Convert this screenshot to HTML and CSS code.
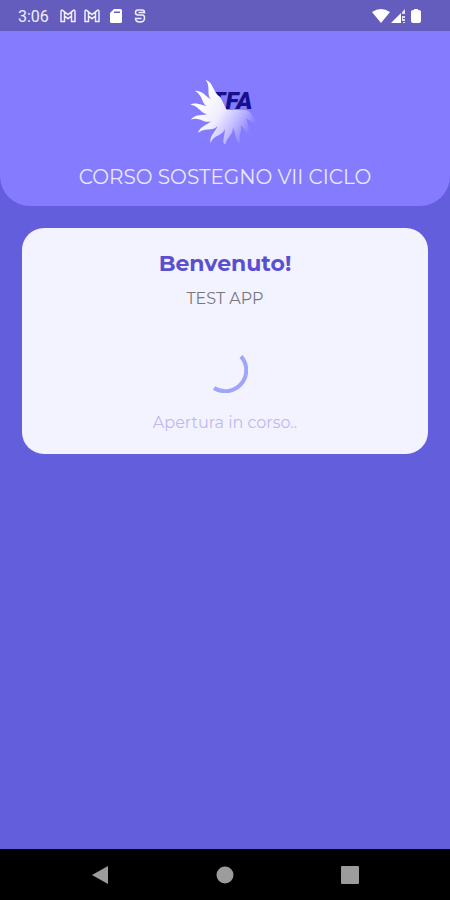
FILE: index.html
```
<!DOCTYPE html>
<html lang="it">
<head>
  <meta charset="UTF-8">
  <meta name="viewport" content="width=device-width, initial-scale=1.0">
  <link rel="stylesheet" href="styles.css">
  <title>Corso Sostegno VII Ciclo</title>
</head>
<body>
  <div class="status-bar">
    <span class="time">3:06</span>
    <div class="status-icons">
      <svg width="16" height="14" viewBox="0 0 16 14"><path d="M1 12.500V2.500Q1 1 2.500 1.300L8 5.500L13.500 1.300Q15 1 15 2.500V12.500H11.500V7L8 9.700L4.500 7V12.500ZM4.500 7V3M11.500 7V3" /></svg>
      <svg width="16" height="14" viewBox="0 0 16 14"><path d="M1 12.500V2.500Q1 1 2.500 1.300L8 5.500L13.500 1.300Q15 1 15 2.500V12.500H11.500V7L8 9.700L4.500 7V12.500ZM4.500 7V3M11.500 7V3" /></svg>
      <svg class="solid" width="16" height="14" viewBox="0 0 16 14"><path fill-rule="evenodd" d="M6 0H12.500Q14 0 14 1.500V12.500Q14 14 12.500 14H3.500Q2 14 2 12.500V4ZM6 2.500V4H12V2.500Z" /></svg>
      <svg width="16" height="14" viewBox="0 0 16 14"><path d="M12.500 4.500V3.500Q12.500 1 10 1H6Q3.500 1 3.500 3.500Q3.500 6 6 6H10.500Q12.500 6 12.500 9Q12.500 13 8 13Q3.500 13 3.500 9.500H9.500M12.500 3.500H6.500" /></svg>
    </div>
    <div class="system-icons">
      <svg class="solid" width="18" height="14" viewBox="0 0 18 14"><path d="M0 3Q9 -3 18 3L9 14Z" /></svg>
      <svg class="solid" width="16" height="14" viewBox="0 0 16 14"><path d="M0 14L10 4V14Z" /><path d="M11 3L14 0V5H11ZM11 7H14V9H12V10H14V12H11ZM12 13H14V14H12Z" opacity=".8" /></svg>
      <svg class="solid" width="16" height="14" viewBox="0 0 16 14"><path d="M6 0H10V1H11Q13 1 13 3V12Q13 14 11 14H5Q3 14 3 12V3Q3 1 5 1H6Z" /></svg>
    </div>
  </div>

  <header class="header">
    <svg class="logo" width="70" height="66" viewBox="0 0 210 198" role="img" aria-label="TFA">
      <defs>
        <linearGradient id="sun-fill" gradientUnits="userSpaceOnUse" x1="40" y1="50" x2="190" y2="140">
          <stop offset="0" stop-color="#ffffff" />
          <stop offset=".4" stop-color="#f0edff" />
          <stop offset=".7" stop-color="#c3bdff" />
          <stop offset="1" stop-color="#877dff" />
        </linearGradient>
        <clipPath id="sun-rays">
          <path id="ray" d="M110 96L98 54C86 18 119 20 122 -14C135 10 113 26 121 54Z" transform="rotate(-41 110 96)" />
          <use href="#ray" transform="rotate(-24 110 96)" />
          <use href="#ray" transform="rotate(-47 110 96)" />
          <use href="#ray" transform="rotate(-70 110 96)" />
          <use href="#ray" transform="rotate(-94 110 96)" />
          <use href="#ray" transform="rotate(-119 110 96)" />
          <use href="#ray" transform="rotate(-143 110 96)" />
          <use href="#ray" transform="rotate(-168 110 96)" />
          <use href="#ray" transform="rotate(-191 110 96)" />
          <use href="#ray" transform="rotate(-214 110 96)" />
        </clipPath>
      </defs>
      <text class="logo-text" x="61" y="92">TFA</text>
      <rect width="210" height="198" fill="url(#sun-fill)" clip-path="url(#sun-rays)" />
    </svg>
    <h1>CORSO SOSTEGNO VII CICLO</h1>
  </header>

  <main>
    <section class="card">
      <h2>Benvenuto!</h2>
      <p class="subtitle">TEST APP</p>
      <svg class="spinner" width="46" height="46" viewBox="0 0 46 46"><path d="M39 9.400A21 21 0 0 1 12 41" /></svg>
      <p class="loading" role="status">Apertura in corso..</p>
    </section>
  </main>

  <nav class="nav-bar">
    <button type="button" aria-label="Indietro"><svg width="18" height="18" viewBox="0 0 18 18"><path d="M1 9L17 0V18Z" /></svg></button>
    <button type="button" aria-label="Home"><svg width="18" height="18" viewBox="0 0 18 18"><circle cx="9" cy="9" r="8.500" /></svg></button>
    <button type="button" aria-label="Recenti"><svg width="18" height="18" viewBox="0 0 18 18"><rect width="18" height="18" rx="1" /></svg></button>
  </nav>
</body>
</html>
```

FILE: styles.css
```
* {
  box-sizing: border-box;
}

body {
  margin: 0;
  min-height: 100vh;
  display: flex;
  flex-direction: column;
  background-color: #635edc;
  font-family: Montserrat, Inter, sans-serif;
}

h1, h2, p {
  margin: 0;
}

.status-bar {
  display: flex;
  align-items: center;
  height: 31px;
  padding: 1px 26px 0 18px;
  background-color: #655dbd;
  color: #f0eeff;
}

.time {
  font-family: Roboto, sans-serif;
  font-size: 16px;
}

.status-icons {
  display: flex;
  gap: 8px;
  margin-left: 11px;
}

.status-icons svg {
  fill: none;
  stroke: #f0eeff;
  stroke-width: 1.5;
}

.system-icons {
  display: flex;
  gap: 1px;
  margin-left: auto;
}

.status-bar .solid {
  fill: #ffffff;
  stroke: none;
}

.header {
  display: flex;
  flex-direction: column;
  align-items: center;
  gap: 19px;
  padding: 47px 16px 15px;
  background-color: #857bff;
  border-radius: 0 0 30px 30px;
}

.logo-text {
  fill: #17108a;
  font-family: Roboto, sans-serif;
  font-size: 74px;
  font-weight: 900;
  font-style: italic;
}

.header h1 {
  color: #eae8ff;
  font-size: 20px;
  line-height: 28px;
  font-weight: 400;
}

main {
  flex: 1;
  padding: 22px;
}

.card {
  display: flex;
  flex-direction: column;
  align-items: center;
  padding: 20px 16px;
  background-color: #f3f3ff;
  border-radius: 22px;
}

.card h2 {
  color: #5a50cf;
  font-size: 22px;
  line-height: 32px;
  font-weight: 700;
}

.subtitle {
  margin-top: 7px;
  color: #77777f;
  font-size: 16px;
  line-height: 24px;
  font-weight: 400;
}

.spinner {
  margin: 36px 0 19px;
  fill: none;
  stroke: #9fa5fb;
  stroke-width: 4;
}

.loading {
  color: #bdb9f2;
  font-size: 16px;
  line-height: 22px;
  font-weight: 400;
}

.nav-bar {
  display: flex;
  justify-content: space-around;
  align-items: center;
  height: 51px;
  padding: 0 38px;
  background-color: #000000;
}

.nav-bar button {
  display: flex;
  padding: 8px;
  border: none;
  background: none;
  cursor: pointer;
}

.nav-bar svg {
  fill: #9c9c9c;
}
```
